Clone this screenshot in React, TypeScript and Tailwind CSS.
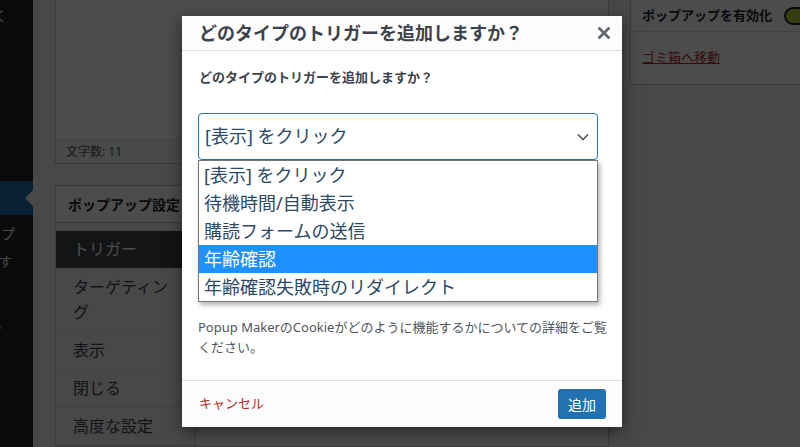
import React from "react";

function Chevron() {
  return (
    <svg width="12" height="8" viewBox="0 0 12 8">
      <path d="M1 1.5 L6 6.5 L11 1.5" fill="none" stroke="#50575e" strokeWidth="1.6" />
    </svg>
  );
}

function CloseIcon() {
  return (
    <svg width="12" height="12" viewBox="0 0 12 12">
      <path d="M1.5 1.5 L10.5 10.5 M10.5 1.5 L1.5 10.5" stroke="#646970" strokeWidth="2.8" strokeLinecap="square" />
    </svg>
  );
}

const options = [
  "[表示] をクリック",
  "待機時間/自動表示",
  "購読フォームの送信",
  "年齢確認",
  "年齢確認失敗時のリダイレクト",
];

const tabs = ["トリガー", "ターゲティング", "表示", "閉じる", "高度な設定"];

export default function App() {
  return (
    <div className="relative w-[800px] h-[447px] overflow-hidden bg-[#f0f0f1] flex font-['Noto_Sans','Noto_Sans_CJK_JP',sans-serif]">
      {/* admin sidebar */}
      <div className="w-[33px] shrink-0 bg-[#1d2327] flex flex-col text-[#f0f0f1] overflow-hidden">
        <div className="h-[30px] w-[7px] flex justify-end items-center whitespace-nowrap text-[14px]">設定を開く</div>
        <div className="h-[151px]" />
        <div className="relative h-[34px] bg-[#2271b1]">
          <div className="absolute right-0 top-[9px] w-0 h-0 border-y-[8px] border-y-transparent border-r-[8px] border-r-[#f0f0f1]" />
        </div>
        <div className="h-[36px] w-[15px] flex justify-end items-center whitespace-nowrap text-[14px]">ポップアップ</div>
        <div className="h-[22px] w-[12px] flex justify-end items-center whitespace-nowrap text-[13px]">すべて表示す</div>
        <div className="h-[45px]" />
        <div className="h-[24px] w-[4px] flex justify-end items-center whitespace-nowrap text-[13px]">テーマィ</div>
      </div>

      {/* main area */}
      <div className="flex pl-[22px] gap-[21px]">
        {/* content column */}
        <div className="w-[554px] shrink-0 flex flex-col">
          <div className="h-[170px] border-x border-b border-[#c3c4c7] bg-white flex flex-col">
            <div className="flex-1" />
            <div className="h-[23px] border-t border-[#dcdcde] bg-[#f6f7f7] px-[10px] flex items-center text-[12px] text-[#50575e]">
              文字数: 11
            </div>
          </div>
          <div className="mt-[21px] border border-[#c3c4c7] bg-white flex flex-col flex-1">
            <div className="h-[37px] border-b border-[#c3c4c7] px-[12px] flex items-center text-[14px] font-semibold text-[#1d2327]">
              ポップアップ設定
            </div>
            <div className="flex flex-1">
              <div className="w-[140px] shrink-0 bg-[#f0f0f1] border-r border-[#c3c4c7] pt-[8px]">
                {tabs.map((t, i) => (
                  <div
                    key={t}
                    className={
                      i === 0
                        ? "px-[17px] py-[6px] leading-[25px] text-[16px] bg-[#3c434a] text-white border-b border-[#dcdcde]"
                        : "px-[17px] py-[6px] leading-[25px] text-[16px] text-[#3c434a] border-b border-[#dcdcde]"
                    }
                  >
                    {t}
                  </div>
                ))}
              </div>
              <div className="flex-1 bg-white" />
            </div>
          </div>
        </div>

        {/* right column */}
        <div className="w-[200px] shrink-0">
          <div className="h-[85px] border-l border-b border-[#c3c4c7] bg-white flex flex-col">
            <div className="h-[32px] border-b border-[#dcdcde] pl-[11px] flex items-center gap-[12px]">
              <span className="text-[13px] font-semibold text-[#1d2327] whitespace-nowrap">ポップアップを有効化</span>
              <span className="w-[36px] h-[18px] rounded-full border-2 border-[#1d2327] bg-[#b9d13a] shrink-0" />
            </div>
            <div className="pl-[11px] pt-[16px] text-[13px] text-[#b32d2e] underline">ゴミ箱へ移動</div>
          </div>
        </div>
      </div>

      {/* overlay */}
      <div className="absolute inset-0 bg-black/70" />

      {/* modal */}
      <div className="absolute left-[182px] top-[16px] w-[440px] h-[411px] bg-white shadow-[0_5px_15px_rgba(0,0,0,0.5)] flex flex-col">
        <div className="h-[35px] shrink-0 border-b border-[#dddddd] bg-[#fcfcfc] pl-[17px] pr-[12px] flex items-center justify-between">
          <span className="text-[18px] font-bold text-[#3c434a] leading-none">どのタイプのトリガーを追加しますか？</span>
          <CloseIcon />
        </div>
        <div className="flex-1 px-[16px] pt-[17px]">
          <div className="pl-[1px] text-[13px] font-semibold leading-[18px] text-[#3c434a]">
            どのタイプのトリガーを追加しますか？
          </div>
          <div className="relative mt-[27px] w-[400px]">
            <div className="h-[47px] border border-[#2271b1] rounded-[4px] flex items-center justify-between pl-[6px] pr-[8px] text-[18px] text-[#2c4a66]">
              <span>[表示] をクリック</span>
              <Chevron />
            </div>
            <div className="absolute z-10 top-full left-0 right-0 bg-white border border-[#767676] shadow-[2px_3px_5px_rgba(0,0,0,0.3)]">
              {options.map((o, i) => (
                <div
                  key={o}
                  className={
                    i === 3
                      ? "h-[28px] flex items-center pl-[5px] text-[18px] bg-[#1e90ff] text-white"
                      : "h-[28px] flex items-center pl-[5px] text-[18px] text-[#2c4a66]"
                  }
                >
                  {o}
                </div>
              ))}
            </div>
          </div>
          <div className="h-[142px] flex items-end">
            <div className="w-[243px] h-[2px] bg-[#8a8a8a]" />
          </div>
          <div className="mt-[15px] text-[13px] leading-[20px] text-[#50575e]">
            <div className="whitespace-nowrap">Popup MakerのCookieがどのように機能するかについての詳細をご覧</div>
            <div className="whitespace-nowrap">ください。</div>
          </div>
        </div>
        <div className="h-[47px] shrink-0 border-t border-[#dddddd] bg-[#fcfcfc] pl-[17px] pr-[16px] flex items-center justify-between">
          <span className="text-[13px] text-[#b32d2e]">キャンセル</span>
          <button className="h-[30px] w-[48px] rounded-[3px] bg-[#2271b1] text-white text-[14px]">追加</button>
        </div>
      </div>
    </div>
  );
}
